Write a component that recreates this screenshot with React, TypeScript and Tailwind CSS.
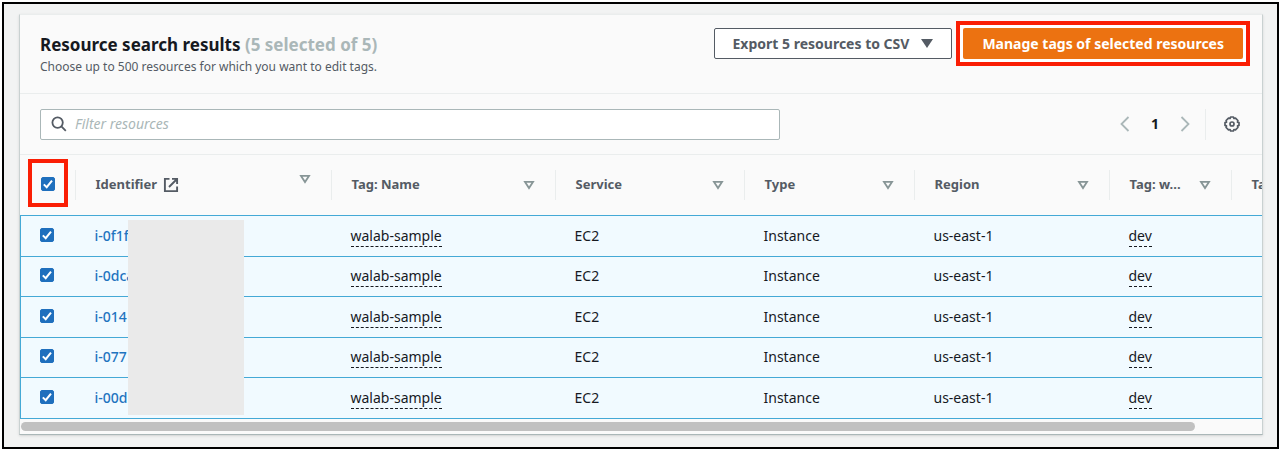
import React, { useState } from "react";

const resources = ["i-0f1f", "i-0dca", "i-014", "i-077", "i-00d"];

const columns = [
  { title: "Identifier", external: true },
  { title: "Tag: Name" },
  { title: "Service" },
  { title: "Type" },
  { title: "Region" },
  { title: "Tag: w..." },
  { title: "Tag" },
];

function Checkbox({ label, checked, onChange }: { label: string; checked: boolean; onChange: () => void }) {
  return (
    <label className="grid size-3.5">
      <input
        type="checkbox"
        aria-label={label}
        checked={checked}
        onChange={onChange}
        className="size-3.5 appearance-none rounded-[2px] border border-[#879596] bg-white [grid-area:1/1] checked:border-[#1f6fbd] checked:bg-[#1f6fbd]"
      />
      {checked && (
        <svg viewBox="0 0 14 14" className="pointer-events-none size-3.5 [grid-area:1/1]" fill="none" stroke="#fff" strokeWidth="2">
          <path d="M2.8 7.4 5.7 10.2 11 3.6" />
        </svg>
      )}
    </label>
  );
}

function SortButton({ column, raised }: { column: string; raised?: boolean }) {
  return (
    <button type="button" aria-label={`Sort by ${column}`} className={raised ? "self-start pt-1" : ""}>
      <svg viewBox="0 0 12 10" className="h-2.5 w-3" fill="none" stroke="#879596" strokeWidth="1.8">
        <path d="M2 1.9h8L6 8Z" />
      </svg>
    </button>
  );
}

export default function App() {
  const [selected, setSelected] = useState(resources.map(() => true));
  const all = selected.every(Boolean);
  const count = selected.filter(Boolean).length;
  const toggle = (i: number) => setSelected(selected.map((s, k) => (k === i ? !s : s)));

  return (
    <div className="bg-white p-0.5 font-['Noto_Sans','Open_Sans',sans-serif] text-sm text-[#16191f]">
      <main className="border-2 border-black bg-[#f2f3f3] pt-2.5 pr-3.5 pb-3 pl-[15px]">
        <section className="overflow-hidden border border-[#c9d1d1] border-t-[#eaeded] border-b-[#aab7b8] bg-[#fafafa] shadow-sm">
          <header className="flex h-[79px] items-start justify-between border-b border-[#eaeded] pr-3 pl-5">
            <div className="pt-[18px]">
              <h2 className="text-[17px] leading-6 font-bold">
                Resource search results{" "}
                <span className="text-[#aab7b8]">
                  ({count} selected of {resources.length})
                </span>
              </h2>
              <p className="text-xs leading-5 text-[#545b64]">
                Choose up to 500 resources for which you want to edit tags.
              </p>
            </div>
            <div className="flex items-center gap-1 pt-1.5">
              <button
                type="button"
                className="flex h-[31px] items-center gap-3 rounded-[2px] border border-[#545b64] bg-white px-[18px] font-bold text-[#545b64]"
              >
                Export {count} resources to CSV
                <svg viewBox="0 0 12 9" className="h-[9px] w-3" fill="currentColor">
                  <path d="M0 0h12L6 9Z" />
                </svg>
              </button>
              <div className="border-4 border-[#fa1e04] bg-white p-[3px]">
                <button type="button" className="block h-[31px] rounded-[2px] bg-[#ec7211] px-[19px] font-bold text-white">
                  Manage tags of selected resources
                </button>
              </div>
            </div>
          </header>

          <div className="flex h-[61px] items-center justify-between border-b border-[#eaeded] pr-[22px] pl-5">
            <label className="flex h-[31px] w-[740px] items-center gap-2 rounded-[2px] border border-[#aab7b8] bg-white px-2.5">
              <svg viewBox="0 0 16 16" className="size-4" fill="none" stroke="#545b64" strokeWidth="1.8">
                <circle cx="6.6" cy="6.6" r="5.2" />
                <path d="m10.4 10.4 4.4 4.4" />
              </svg>
              <input
                type="search"
                aria-label="Filter resources"
                placeholder="Filter resources"
                className="min-w-0 flex-1 bg-transparent outline-none placeholder:text-[#aab7b8] placeholder:italic"
              />
            </label>
            <nav aria-label="Pagination" className="flex items-center">
              <button type="button" aria-label="Previous page">
                <svg viewBox="0 0 16 16" className="size-4" fill="none" stroke="#aab7b8" strokeWidth="1.8">
                  <path d="M11.5 1 4.5 8l7 7" />
                </svg>
              </button>
              <button type="button" aria-current="page" className="w-11 text-center font-bold">
                1
              </button>
              <button type="button" aria-label="Next page">
                <svg viewBox="0 0 16 16" className="size-4" fill="none" stroke="#aab7b8" strokeWidth="1.8">
                  <path d="m4.5 1 7 7-7 7" />
                </svg>
              </button>
              <button type="button" aria-label="Preferences" className="ml-3 flex h-[31px] items-center border-l border-[#eaeded] pl-[18px]">
                <svg viewBox="0 0 16 16" className="size-4" fill="none" stroke="#545b64" strokeWidth="1.7" strokeLinejoin="round">
                  <path d="M6.6 1h2.8l.5 1.5 1.6-.4 2.4 2.4-.4 1.6 1.5.5v2.8l-1.5.5.4 1.6-2.4 2.4-1.6-.4-.5 1.500H6.600l-.5-1.500-1.600.4L2.100 11.500l.4-1.600L1 9.400V6.600l1.500-.5-.4-1.600 2.400-2.400 1.600.4Z" />
                  <circle cx="8" cy="8" r="2" />
                </svg>
              </button>
            </nav>
          </div>

          <div className="relative">
            <div className="overflow-hidden">
              <table className="w-[1310px] table-fixed border-collapse">
                <colgroup>
                  <col className="w-[54px]" />
                  <col className="w-[256px]" />
                  <col className="w-[224px]" />
                  <col className="w-[189px]" />
                  <col className="w-[170px]" />
                  <col className="w-[195px]" />
                  <col className="w-[122px]" />
                  <col className="w-[100px]" />
                </colgroup>
                <thead>
                  <tr className="h-[60px]">
                    <th className="p-0 pt-1 pl-[7px] align-top">
                      <div className="w-fit border-4 border-[#fa1e04] px-[9px] pt-3.5 pb-3">
                        <Checkbox
                          label="Select all resources"
                          checked={all}
                          onChange={() => setSelected(resources.map(() => !all))}
                        />
                      </div>
                    </th>
                    {columns.map((c) => (
                      <th key={c.title} className="p-0 text-left text-[13px] font-bold text-[#545b64]">
                        <div className="flex h-[30px] items-center justify-between border-l border-[#eaeded] px-5">
                          <span className="flex items-center gap-1.5 whitespace-nowrap">
                            {c.title}
                            {c.external && (
                              <svg viewBox="0 0 16 16" className="size-4" fill="none" stroke="currentColor" strokeWidth="1.9">
                                <path d="M6.5 1.9H1.9v12.2h12.2V9.5M9 1.9h5.1V7M14 2 6 10" />
                              </svg>
                            )}
                          </span>
                          <SortButton column={c.title} raised={c.external} />
                        </div>
                      </th>
                    ))}
                  </tr>
                </thead>
                <tbody>
                  {resources.map((id, i) => (
                    <tr key={id} className="border border-[#44a9d6] bg-[#f1faff] odd:h-[41px] even:h-10">
                      <td className="p-0 pb-0.5 pl-[19px]">
                        <Checkbox label={`Select ${id}`} checked={selected[i]} onChange={() => toggle(i)} />
                      </td>
                      <td className="p-0 pl-5">
                        <a href="#" className="font-medium text-[#1f74bf]">
                          {id}
                        </a>
                      </td>
                      <td className="p-0 pl-5">
                        <span className="border-b border-dashed border-[#16191f] pb-px">walab-sample</span>
                      </td>
                      <td className="p-0 pl-5">EC2</td>
                      <td className="p-0 pl-5">Instance</td>
                      <td className="p-0 pl-5">us-east-1</td>
                      <td className="p-0 pl-5">
                        <span className="border-b border-dashed border-[#16191f] pb-px">dev</span>
                      </td>
                      <td className="p-0" />
                    </tr>
                  ))}
                </tbody>
              </table>
            </div>
            <div className="absolute top-[65px] bottom-1 left-[108px] w-[116px] bg-[#eaeaea]" />
          </div>

          <div className="px-px py-[3px]">
            <div className="h-[9px] w-[94.7%] rounded-full bg-[#c1c1c1]" />
          </div>
        </section>
      </main>
    </div>
  );
}
